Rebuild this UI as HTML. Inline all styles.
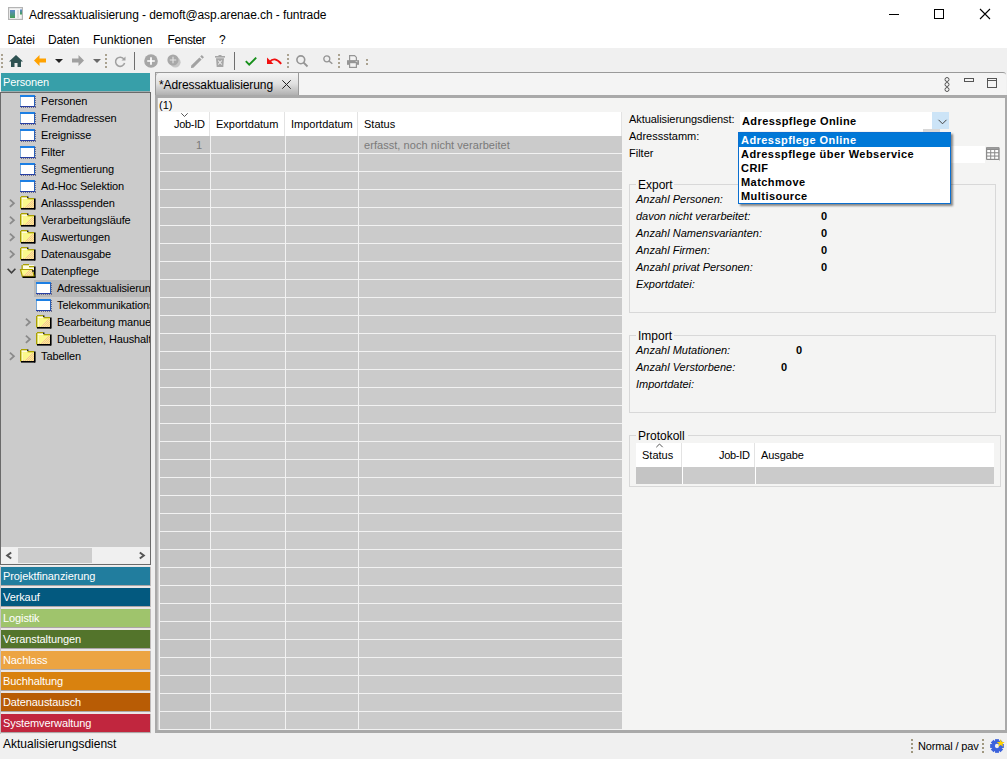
<!DOCTYPE html>
<html><head><meta charset="utf-8">
<style>
*{box-sizing:border-box;margin:0;padding:0}
html,body{width:1007px;height:759px;overflow:hidden;background:#f0f0f0;font-family:"Liberation Sans",sans-serif;color:#000}
body{position:relative}
.a{position:absolute}
.t{position:absolute;white-space:pre;line-height:1}
svg{position:absolute;overflow:visible}
</style></head><body>

<div class="a" style="left:0px;top:0px;width:1007px;height:48px;background:#fff;"></div>
<svg style="left:8px;top:7px" width="15" height="13" viewBox="0 0 15 13"><defs><linearGradient id="ig" x1="0" y1="0" x2="0" y2="1"><stop offset="0" stop-color="#5a88c8"/><stop offset="1" stop-color="#44a055"/></linearGradient></defs><rect x="0.6" y="0.6" width="13.8" height="11.8" fill="#f6f6f6" stroke="#b4b4b4" stroke-width="1.2"/><rect x="2" y="3" width="5" height="8" fill="url(#ig)"/><rect x="9" y="3" width="2" height="8" fill="#dedede"/><rect x="12" y="2.5" width="2" height="5" fill="url(#ig)"/></svg>
<div class="t" style="left:29px;top:8.84px;font-size:12px;font-weight:400;font-style:normal;color:#000;letter-spacing:-0.08px">Adressaktualisierung - demoft@asp.arenae.ch - funtrade</div>
<div class="a" style="left:889px;top:14px;width:10px;height:1px;background:#000;"></div>
<svg style="left:934px;top:9px" width="10" height="10"><rect x="0.5" y="0.5" width="9" height="9" fill="none" stroke="#000"/></svg>
<svg style="left:980px;top:9px" width="10" height="10"><path d="M0 0L10 10M10 0L0 10" stroke="#000" stroke-width="1.1"/></svg>
<div class="t" style="left:7.5px;top:33.84px;font-size:12px;font-weight:400;font-style:normal;color:#000;letter-spacing:-0.15px">Datei</div>
<div class="t" style="left:48px;top:33.84px;font-size:12px;font-weight:400;font-style:normal;color:#000;letter-spacing:-0.15px">Daten</div>
<div class="t" style="left:93px;top:33.84px;font-size:12px;font-weight:400;font-style:normal;color:#000;letter-spacing:0px">Funktionen</div>
<div class="t" style="left:167.5px;top:33.84px;font-size:12px;font-weight:400;font-style:normal;color:#000;letter-spacing:-0.4px">Fenster</div>
<div class="t" style="left:219px;top:33.84px;font-size:12px;font-weight:400;font-style:normal;color:#000;letter-spacing:0px">?</div>
<div class="a" style="left:1px;top:54px;width:2px;height:2px;background:#aaa290;"></div>
<div class="a" style="left:1px;top:58px;width:2px;height:2px;background:#aaa290;"></div>
<div class="a" style="left:1px;top:62px;width:2px;height:2px;background:#aaa290;"></div>
<div class="a" style="left:1px;top:66px;width:2px;height:2px;background:#aaa290;"></div>
<svg style="left:9px;top:55px" width="14" height="12" viewBox="0 0 14 12"><path d="M7 0L14 6.5H12V12H8.5V8H5.5V12H2V6.5H0Z" fill="#2e5252"/></svg>
<svg style="left:34px;top:55px" width="12" height="11" viewBox="0 0 12 11"><path d="M0 5.5L5.5 0V3.5H12V7.5H5.5V11Z" fill="#ffa200"/></svg>
<svg style="left:55px;top:59px" width="8" height="4"><path d="M0 0H8L4 4Z" fill="#222"/></svg>
<svg style="left:72px;top:55px" width="12" height="11" viewBox="0 0 12 11"><path d="M12 5.5L6.5 0V3.5H0V7.5H6.5V11Z" fill="#a0a0a0"/></svg>
<svg style="left:93px;top:59px" width="8" height="4"><path d="M0 0H8L4 4Z" fill="#6a6a6a"/></svg>
<div class="a" style="left:105px;top:54px;width:2px;height:2px;background:#aaa290;"></div>
<div class="a" style="left:105px;top:58px;width:2px;height:2px;background:#aaa290;"></div>
<div class="a" style="left:105px;top:62px;width:2px;height:2px;background:#aaa290;"></div>
<div class="a" style="left:105px;top:66px;width:2px;height:2px;background:#aaa290;"></div>
<svg style="left:114px;top:56px" width="12" height="11" viewBox="0 0 12 11"><path d="M10 3.2A4.6 4.6 0 1 0 10.6 7" fill="none" stroke="#a0a0a0" stroke-width="1.5"/><path d="M11.5 0.5V4.5H7.5Z" fill="#a0a0a0"/></svg>
<div class="a" style="left:134px;top:52px;width:1px;height:18px;background:#6e6e6e;"></div>
<svg style="left:144px;top:54px" width="14" height="14" viewBox="0 0 14 14"><circle cx="7" cy="7" r="6.8" fill="#a6a6a6"/><path d="M7 3.2V10.8M3.2 7H10.8" stroke="#fff" stroke-width="1.7"/></svg>
<svg style="left:167px;top:54px" width="14" height="14" viewBox="0 0 14 14"><circle cx="8.3" cy="8.3" r="5.3" fill="#c6c6c6"/><circle cx="6" cy="6" r="5.6" fill="#a8a8a8"/><path d="M6 2.8V9.2M2.8 6H9.2" stroke="#e4e4e4" stroke-width="1.1"/></svg>
<svg style="left:191px;top:55px" width="13" height="13" viewBox="0 0 13 13"><path d="M0 13L0.2 10.6L8.4 2.4L10.6 4.6L2.4 12.8Z" fill="#a2a2a2"/><path d="M9.2 1.6L10.8 0L13 2.2L11.4 3.8Z" fill="#a2a2a2"/></svg>
<svg style="left:215px;top:55px" width="10" height="12" viewBox="0 0 10 12"><rect x="0" y="1" width="10" height="1.6" fill="#a6a6a6"/><rect x="3.5" y="0" width="3" height="1.2" fill="#a6a6a6"/><path d="M1 3.2H9L8.3 12H1.7Z" fill="#a6a6a6"/><path d="M3.2 5.5L6.8 9.5M6.8 5.5L3.2 9.5" stroke="#f0f0f0" stroke-width="1.1"/></svg>
<div class="a" style="left:234px;top:52px;width:1px;height:18px;background:#6e6e6e;"></div>
<svg style="left:245px;top:57px" width="12" height="9" viewBox="0 0 12 9"><path d="M0.8 4.2L4.2 7.6L11.2 0.6" fill="none" stroke="#17901b" stroke-width="1.9"/></svg>
<svg style="left:266px;top:57px" width="16" height="8" viewBox="0 0 16 8"><path d="M3.5 5.2Q8.5 -1.2 15.2 6.8" fill="none" stroke="#f01010" stroke-width="1.9"/><path d="M1 0.5V7H7.5Z" fill="#f01010"/></svg>
<div class="a" style="left:287px;top:54px;width:2px;height:2px;background:#aaa290;"></div>
<div class="a" style="left:287px;top:58px;width:2px;height:2px;background:#aaa290;"></div>
<div class="a" style="left:287px;top:62px;width:2px;height:2px;background:#aaa290;"></div>
<div class="a" style="left:287px;top:66px;width:2px;height:2px;background:#aaa290;"></div>
<svg style="left:296px;top:55px" width="12" height="12" viewBox="0 0 12 12"><circle cx="4.8" cy="4.8" r="3.9" fill="none" stroke="#959595" stroke-width="1.6"/><path d="M7.5 7.5L11.5 11.5" stroke="#959595" stroke-width="1.8"/></svg>
<svg style="left:323px;top:55px" width="10" height="9" viewBox="0 0 10 9"><circle cx="3.8" cy="3.8" r="3" fill="none" stroke="#959595" stroke-width="1.3"/><path d="M6 6L9.3 8.8" stroke="#959595" stroke-width="1.5"/></svg>
<div class="a" style="left:338px;top:54px;width:2px;height:2px;background:#aaa290;"></div>
<div class="a" style="left:338px;top:58px;width:2px;height:2px;background:#aaa290;"></div>
<div class="a" style="left:338px;top:62px;width:2px;height:2px;background:#aaa290;"></div>
<div class="a" style="left:338px;top:66px;width:2px;height:2px;background:#aaa290;"></div>
<svg style="left:347px;top:55px" width="12" height="13" viewBox="0 0 12 13"><path d="M2.6 0.6H7.6L9.4 2.4V6H2.6Z" fill="#f2f2f2" stroke="#959595" stroke-width="1.2"/><rect x="0" y="5.2" width="12" height="4.6" fill="#959595"/><rect x="8.6" y="6.2" width="1.8" height="1.2" fill="#dedede"/><rect x="2.6" y="7.6" width="6.8" height="4.8" fill="#f2f2f2" stroke="#959595" stroke-width="1.2"/></svg>
<div class="a" style="left:366px;top:59px;width:2px;height:2px;background:#aaa290;"></div>
<div class="a" style="left:366px;top:63px;width:2px;height:2px;background:#aaa290;"></div>
<div class="a" style="left:1px;top:73px;width:149px;height:18px;background:#379fa9;"></div>
<div class="t" style="left:3px;top:76.69px;font-size:11px;font-weight:400;font-style:normal;color:#fff;letter-spacing:-0.15px">Personen</div>
<div class="a" style="left:1px;top:91px;width:149px;height:1px;background:#9aaeb0;"></div>
<div class="a" style="left:0px;top:92px;width:151px;height:472px;background:#cbcbcb;border-left:1px solid #6a6a6a;border-top:1px solid #6a6a6a;border-right:1px solid #6a6a6a;"></div>
<div class="a" style="left:1px;top:93px;width:149px;height:454px;overflow:hidden">
<svg style="left:19px;top:2px" width="16" height="13" viewBox="0 0 16 13"><rect x="0" y="0" width="15" height="2" fill="#1c7fe4"/><rect x="0" y="2" width="1" height="10" fill="#78a8d8"/><rect x="1" y="2" width="13" height="9" fill="#fff"/><rect x="14" y="1" width="1" height="11" fill="#2860b8"/><rect x="0" y="11" width="15" height="1" fill="#2840a4"/><path d="M15.5 1V13M1 12.5H16" fill="none" stroke="#6c6c88" stroke-dasharray="1 1"/></svg>
<div class="t" style="left:40px;top:2.69px;font-size:11px;font-weight:400;font-style:normal;color:#000;letter-spacing:-0.12px">Personen</div>
<svg style="left:19px;top:19px" width="16" height="13" viewBox="0 0 16 13"><rect x="0" y="0" width="15" height="2" fill="#1c7fe4"/><rect x="0" y="2" width="1" height="10" fill="#78a8d8"/><rect x="1" y="2" width="13" height="9" fill="#fff"/><rect x="14" y="1" width="1" height="11" fill="#2860b8"/><rect x="0" y="11" width="15" height="1" fill="#2840a4"/><path d="M15.5 1V13M1 12.5H16" fill="none" stroke="#6c6c88" stroke-dasharray="1 1"/></svg>
<div class="t" style="left:40px;top:19.69px;font-size:11px;font-weight:400;font-style:normal;color:#000;letter-spacing:-0.12px">Fremdadressen</div>
<svg style="left:19px;top:36px" width="16" height="13" viewBox="0 0 16 13"><rect x="0" y="0" width="15" height="2" fill="#1c7fe4"/><rect x="0" y="2" width="1" height="10" fill="#78a8d8"/><rect x="1" y="2" width="13" height="9" fill="#fff"/><rect x="14" y="1" width="1" height="11" fill="#2860b8"/><rect x="0" y="11" width="15" height="1" fill="#2840a4"/><path d="M15.5 1V13M1 12.5H16" fill="none" stroke="#6c6c88" stroke-dasharray="1 1"/></svg>
<div class="t" style="left:40px;top:36.69px;font-size:11px;font-weight:400;font-style:normal;color:#000;letter-spacing:-0.12px">Ereignisse</div>
<svg style="left:19px;top:53px" width="16" height="13" viewBox="0 0 16 13"><rect x="0" y="0" width="15" height="2" fill="#1c7fe4"/><rect x="0" y="2" width="1" height="10" fill="#78a8d8"/><rect x="1" y="2" width="13" height="9" fill="#fff"/><rect x="14" y="1" width="1" height="11" fill="#2860b8"/><rect x="0" y="11" width="15" height="1" fill="#2840a4"/><path d="M15.5 1V13M1 12.5H16" fill="none" stroke="#6c6c88" stroke-dasharray="1 1"/></svg>
<div class="t" style="left:40px;top:53.69px;font-size:11px;font-weight:400;font-style:normal;color:#000;letter-spacing:-0.12px">Filter</div>
<svg style="left:19px;top:70px" width="16" height="13" viewBox="0 0 16 13"><rect x="0" y="0" width="15" height="2" fill="#1c7fe4"/><rect x="0" y="2" width="1" height="10" fill="#78a8d8"/><rect x="1" y="2" width="13" height="9" fill="#fff"/><rect x="14" y="1" width="1" height="11" fill="#2860b8"/><rect x="0" y="11" width="15" height="1" fill="#2840a4"/><path d="M15.5 1V13M1 12.5H16" fill="none" stroke="#6c6c88" stroke-dasharray="1 1"/></svg>
<div class="t" style="left:40px;top:70.69px;font-size:11px;font-weight:400;font-style:normal;color:#000;letter-spacing:-0.12px">Segmentierung</div>
<svg style="left:19px;top:87px" width="16" height="13" viewBox="0 0 16 13"><rect x="0" y="0" width="15" height="2" fill="#1c7fe4"/><rect x="0" y="2" width="1" height="10" fill="#78a8d8"/><rect x="1" y="2" width="13" height="9" fill="#fff"/><rect x="14" y="1" width="1" height="11" fill="#2860b8"/><rect x="0" y="11" width="15" height="1" fill="#2840a4"/><path d="M15.5 1V13M1 12.5H16" fill="none" stroke="#6c6c88" stroke-dasharray="1 1"/></svg>
<div class="t" style="left:40px;top:87.69px;font-size:11px;font-weight:400;font-style:normal;color:#000;letter-spacing:-0.12px">Ad-Hoc Selektion</div>
<svg style="left:19px;top:103px" width="16" height="14" viewBox="0 0 16 14"><rect x="1" y="1" width="7" height="2" fill="#fffde0"/><rect x="1" y="3" width="13" height="9" fill="#fbf88c"/><rect x="1.5" y="3.5" width="1" height="8" fill="#fffff0"/><rect x="12" y="4" width="1" height="1" fill="#f6bc98"/><rect x="11" y="5" width="1" height="1" fill="#f6bc98"/><rect x="13" y="5" width="1" height="1" fill="#f6bc98"/><rect x="12" y="6" width="1" height="1" fill="#f6bc98"/><rect x="10" y="6" width="1" height="1" fill="#f6bc98"/><rect x="11" y="7" width="1" height="1" fill="#f6bc98"/><rect x="13" y="7" width="1" height="1" fill="#f6bc98"/><rect x="9" y="7" width="1" height="1" fill="#f6bc98"/><rect x="10" y="8" width="1" height="1" fill="#f6bc98"/><rect x="12" y="8" width="1" height="1" fill="#f6bc98"/><rect x="8" y="8" width="1" height="1" fill="#f6bc98"/><rect x="11" y="9" width="1" height="1" fill="#f6bc98"/><rect x="13" y="9" width="1" height="1" fill="#f6bc98"/><rect x="9" y="9" width="1" height="1" fill="#f6bc98"/><rect x="7" y="9" width="1" height="1" fill="#f6bc98"/><rect x="10" y="10" width="1" height="1" fill="#f6bc98"/><rect x="12" y="10" width="1" height="1" fill="#f6bc98"/><rect x="8" y="10" width="1" height="1" fill="#f6bc98"/><rect x="6" y="10" width="1" height="1" fill="#f6bc98"/><rect x="11" y="11" width="1" height="1" fill="#f6bc98"/><rect x="13" y="11" width="1" height="1" fill="#f6bc98"/><rect x="9" y="11" width="1" height="1" fill="#f6bc98"/><rect x="7" y="11" width="1" height="1" fill="#f6bc98"/><rect x="5" y="11" width="1" height="1" fill="#f6bc98"/><rect x="3" y="11" width="1" height="1" fill="#f6bc98"/><rect x="1" y="0" width="6.5" height="1.3" fill="#aaa000"/><rect x="7" y="0.5" width="1.5" height="1.5" fill="#222"/><rect x="0" y="1" width="1.4" height="11.5" fill="#aaa000"/><rect x="7.5" y="2" width="6.5" height="1.3" fill="#aaa000"/><rect x="1" y="12" width="14" height="1.6" fill="#000"/><rect x="14" y="2.5" width="1.6" height="11" fill="#000"/></svg>
<svg style="left:8px;top:106px" width="6" height="8" viewBox="0 0 6 8"><path d="M0.9 0.6L4.9 4.2L0.9 7.8" fill="none" stroke="#8a8a8a" stroke-width="1.8"/></svg>
<div class="t" style="left:40px;top:104.69px;font-size:11px;font-weight:400;font-style:normal;color:#000;letter-spacing:-0.12px">Anlassspenden</div>
<svg style="left:19px;top:120px" width="16" height="14" viewBox="0 0 16 14"><rect x="1" y="1" width="7" height="2" fill="#fffde0"/><rect x="1" y="3" width="13" height="9" fill="#fbf88c"/><rect x="1.5" y="3.5" width="1" height="8" fill="#fffff0"/><rect x="12" y="4" width="1" height="1" fill="#f6bc98"/><rect x="11" y="5" width="1" height="1" fill="#f6bc98"/><rect x="13" y="5" width="1" height="1" fill="#f6bc98"/><rect x="12" y="6" width="1" height="1" fill="#f6bc98"/><rect x="10" y="6" width="1" height="1" fill="#f6bc98"/><rect x="11" y="7" width="1" height="1" fill="#f6bc98"/><rect x="13" y="7" width="1" height="1" fill="#f6bc98"/><rect x="9" y="7" width="1" height="1" fill="#f6bc98"/><rect x="10" y="8" width="1" height="1" fill="#f6bc98"/><rect x="12" y="8" width="1" height="1" fill="#f6bc98"/><rect x="8" y="8" width="1" height="1" fill="#f6bc98"/><rect x="11" y="9" width="1" height="1" fill="#f6bc98"/><rect x="13" y="9" width="1" height="1" fill="#f6bc98"/><rect x="9" y="9" width="1" height="1" fill="#f6bc98"/><rect x="7" y="9" width="1" height="1" fill="#f6bc98"/><rect x="10" y="10" width="1" height="1" fill="#f6bc98"/><rect x="12" y="10" width="1" height="1" fill="#f6bc98"/><rect x="8" y="10" width="1" height="1" fill="#f6bc98"/><rect x="6" y="10" width="1" height="1" fill="#f6bc98"/><rect x="11" y="11" width="1" height="1" fill="#f6bc98"/><rect x="13" y="11" width="1" height="1" fill="#f6bc98"/><rect x="9" y="11" width="1" height="1" fill="#f6bc98"/><rect x="7" y="11" width="1" height="1" fill="#f6bc98"/><rect x="5" y="11" width="1" height="1" fill="#f6bc98"/><rect x="3" y="11" width="1" height="1" fill="#f6bc98"/><rect x="1" y="0" width="6.5" height="1.3" fill="#aaa000"/><rect x="7" y="0.5" width="1.5" height="1.5" fill="#222"/><rect x="0" y="1" width="1.4" height="11.5" fill="#aaa000"/><rect x="7.5" y="2" width="6.5" height="1.3" fill="#aaa000"/><rect x="1" y="12" width="14" height="1.6" fill="#000"/><rect x="14" y="2.5" width="1.6" height="11" fill="#000"/></svg>
<svg style="left:8px;top:123px" width="6" height="8" viewBox="0 0 6 8"><path d="M0.9 0.6L4.9 4.2L0.9 7.8" fill="none" stroke="#8a8a8a" stroke-width="1.8"/></svg>
<div class="t" style="left:40px;top:121.69px;font-size:11px;font-weight:400;font-style:normal;color:#000;letter-spacing:-0.12px">Verarbeitungsläufe</div>
<svg style="left:19px;top:137px" width="16" height="14" viewBox="0 0 16 14"><rect x="1" y="1" width="7" height="2" fill="#fffde0"/><rect x="1" y="3" width="13" height="9" fill="#fbf88c"/><rect x="1.5" y="3.5" width="1" height="8" fill="#fffff0"/><rect x="12" y="4" width="1" height="1" fill="#f6bc98"/><rect x="11" y="5" width="1" height="1" fill="#f6bc98"/><rect x="13" y="5" width="1" height="1" fill="#f6bc98"/><rect x="12" y="6" width="1" height="1" fill="#f6bc98"/><rect x="10" y="6" width="1" height="1" fill="#f6bc98"/><rect x="11" y="7" width="1" height="1" fill="#f6bc98"/><rect x="13" y="7" width="1" height="1" fill="#f6bc98"/><rect x="9" y="7" width="1" height="1" fill="#f6bc98"/><rect x="10" y="8" width="1" height="1" fill="#f6bc98"/><rect x="12" y="8" width="1" height="1" fill="#f6bc98"/><rect x="8" y="8" width="1" height="1" fill="#f6bc98"/><rect x="11" y="9" width="1" height="1" fill="#f6bc98"/><rect x="13" y="9" width="1" height="1" fill="#f6bc98"/><rect x="9" y="9" width="1" height="1" fill="#f6bc98"/><rect x="7" y="9" width="1" height="1" fill="#f6bc98"/><rect x="10" y="10" width="1" height="1" fill="#f6bc98"/><rect x="12" y="10" width="1" height="1" fill="#f6bc98"/><rect x="8" y="10" width="1" height="1" fill="#f6bc98"/><rect x="6" y="10" width="1" height="1" fill="#f6bc98"/><rect x="11" y="11" width="1" height="1" fill="#f6bc98"/><rect x="13" y="11" width="1" height="1" fill="#f6bc98"/><rect x="9" y="11" width="1" height="1" fill="#f6bc98"/><rect x="7" y="11" width="1" height="1" fill="#f6bc98"/><rect x="5" y="11" width="1" height="1" fill="#f6bc98"/><rect x="3" y="11" width="1" height="1" fill="#f6bc98"/><rect x="1" y="0" width="6.5" height="1.3" fill="#aaa000"/><rect x="7" y="0.5" width="1.5" height="1.5" fill="#222"/><rect x="0" y="1" width="1.4" height="11.5" fill="#aaa000"/><rect x="7.5" y="2" width="6.5" height="1.3" fill="#aaa000"/><rect x="1" y="12" width="14" height="1.6" fill="#000"/><rect x="14" y="2.5" width="1.6" height="11" fill="#000"/></svg>
<svg style="left:8px;top:140px" width="6" height="8" viewBox="0 0 6 8"><path d="M0.9 0.6L4.9 4.2L0.9 7.8" fill="none" stroke="#8a8a8a" stroke-width="1.8"/></svg>
<div class="t" style="left:40px;top:138.69px;font-size:11px;font-weight:400;font-style:normal;color:#000;letter-spacing:-0.12px">Auswertungen</div>
<svg style="left:19px;top:154px" width="16" height="14" viewBox="0 0 16 14"><rect x="1" y="1" width="7" height="2" fill="#fffde0"/><rect x="1" y="3" width="13" height="9" fill="#fbf88c"/><rect x="1.5" y="3.5" width="1" height="8" fill="#fffff0"/><rect x="12" y="4" width="1" height="1" fill="#f6bc98"/><rect x="11" y="5" width="1" height="1" fill="#f6bc98"/><rect x="13" y="5" width="1" height="1" fill="#f6bc98"/><rect x="12" y="6" width="1" height="1" fill="#f6bc98"/><rect x="10" y="6" width="1" height="1" fill="#f6bc98"/><rect x="11" y="7" width="1" height="1" fill="#f6bc98"/><rect x="13" y="7" width="1" height="1" fill="#f6bc98"/><rect x="9" y="7" width="1" height="1" fill="#f6bc98"/><rect x="10" y="8" width="1" height="1" fill="#f6bc98"/><rect x="12" y="8" width="1" height="1" fill="#f6bc98"/><rect x="8" y="8" width="1" height="1" fill="#f6bc98"/><rect x="11" y="9" width="1" height="1" fill="#f6bc98"/><rect x="13" y="9" width="1" height="1" fill="#f6bc98"/><rect x="9" y="9" width="1" height="1" fill="#f6bc98"/><rect x="7" y="9" width="1" height="1" fill="#f6bc98"/><rect x="10" y="10" width="1" height="1" fill="#f6bc98"/><rect x="12" y="10" width="1" height="1" fill="#f6bc98"/><rect x="8" y="10" width="1" height="1" fill="#f6bc98"/><rect x="6" y="10" width="1" height="1" fill="#f6bc98"/><rect x="11" y="11" width="1" height="1" fill="#f6bc98"/><rect x="13" y="11" width="1" height="1" fill="#f6bc98"/><rect x="9" y="11" width="1" height="1" fill="#f6bc98"/><rect x="7" y="11" width="1" height="1" fill="#f6bc98"/><rect x="5" y="11" width="1" height="1" fill="#f6bc98"/><rect x="3" y="11" width="1" height="1" fill="#f6bc98"/><rect x="1" y="0" width="6.5" height="1.3" fill="#aaa000"/><rect x="7" y="0.5" width="1.5" height="1.5" fill="#222"/><rect x="0" y="1" width="1.4" height="11.5" fill="#aaa000"/><rect x="7.5" y="2" width="6.5" height="1.3" fill="#aaa000"/><rect x="1" y="12" width="14" height="1.6" fill="#000"/><rect x="14" y="2.5" width="1.6" height="11" fill="#000"/></svg>
<svg style="left:8px;top:157px" width="6" height="8" viewBox="0 0 6 8"><path d="M0.9 0.6L4.9 4.2L0.9 7.8" fill="none" stroke="#8a8a8a" stroke-width="1.8"/></svg>
<div class="t" style="left:40px;top:155.69px;font-size:11px;font-weight:400;font-style:normal;color:#000;letter-spacing:-0.12px">Datenausgabe</div>
<svg style="left:19px;top:171px" width="16" height="14" viewBox="0 0 16 14"><rect x="2" y="1" width="12" height="5" fill="#fffde0"/><rect x="3" y="0" width="6" height="1.3" fill="#aaa000"/><rect x="1.5" y="1" width="1.3" height="5" fill="#aaa000"/><rect x="9" y="2" width="5" height="1.3" fill="#aaa000"/><rect x="14" y="2.5" width="1.6" height="11" fill="#000"/><path d="M0.5 5.5H12.5L14 12.3H2.3Z" fill="#fbf88c" stroke="#aaa000" stroke-width="1.2"/><rect x="9" y="6" width="1" height="1" fill="#f6bc98"/><rect x="11" y="6" width="1" height="1" fill="#f6bc98"/><rect x="8" y="7" width="1" height="1" fill="#f6bc98"/><rect x="10" y="7" width="1" height="1" fill="#f6bc98"/><rect x="12" y="7" width="1" height="1" fill="#f6bc98"/><rect x="7" y="8" width="1" height="1" fill="#f6bc98"/><rect x="9" y="8" width="1" height="1" fill="#f6bc98"/><rect x="11" y="8" width="1" height="1" fill="#f6bc98"/><rect x="6" y="9" width="1" height="1" fill="#f6bc98"/><rect x="8" y="9" width="1" height="1" fill="#f6bc98"/><rect x="10" y="9" width="1" height="1" fill="#f6bc98"/><rect x="12" y="9" width="1" height="1" fill="#f6bc98"/><rect x="5" y="10" width="1" height="1" fill="#f6bc98"/><rect x="7" y="10" width="1" height="1" fill="#f6bc98"/><rect x="9" y="10" width="1" height="1" fill="#f6bc98"/><rect x="11" y="10" width="1" height="1" fill="#f6bc98"/><rect x="4" y="11" width="1" height="1" fill="#f6bc98"/><rect x="6" y="11" width="1" height="1" fill="#f6bc98"/><rect x="8" y="11" width="1" height="1" fill="#f6bc98"/><rect x="10" y="11" width="1" height="1" fill="#f6bc98"/><rect x="12" y="11" width="1" height="1" fill="#f6bc98"/><rect x="12.3" y="6" width="1.3" height="2" fill="#111"/><rect x="2.5" y="12.5" width="13" height="1.5" fill="#000"/></svg>
<svg style="left:6px;top:175px" width="9" height="6" viewBox="0 0 9 6"><path d="M0.6 0.8L4.5 4.8L8.4 0.8" fill="none" stroke="#404040" stroke-width="1.6"/></svg>
<div class="t" style="left:40px;top:172.69px;font-size:11px;font-weight:400;font-style:normal;color:#000;letter-spacing:-0.12px">Datenpflege</div>
<div class="a" style="left:33px;top:187px;width:120px;height:17px;background:#b8b8b8;"></div>
<svg style="left:35px;top:189px" width="16" height="13" viewBox="0 0 16 13"><rect x="0" y="0" width="15" height="2" fill="#1c7fe4"/><rect x="0" y="2" width="1" height="10" fill="#78a8d8"/><rect x="1" y="2" width="13" height="9" fill="#fff"/><rect x="14" y="1" width="1" height="11" fill="#2860b8"/><rect x="0" y="11" width="15" height="1" fill="#2840a4"/><path d="M15.5 1V13M1 12.5H16" fill="none" stroke="#6c6c88" stroke-dasharray="1 1"/></svg>
<div class="t" style="left:56px;top:189.69px;font-size:11px;font-weight:400;font-style:normal;color:#000;letter-spacing:-0.12px">Adressaktualisierung</div>
<svg style="left:35px;top:206px" width="16" height="13" viewBox="0 0 16 13"><rect x="0" y="0" width="15" height="2" fill="#1c7fe4"/><rect x="0" y="2" width="1" height="10" fill="#78a8d8"/><rect x="1" y="2" width="13" height="9" fill="#fff"/><rect x="14" y="1" width="1" height="11" fill="#2860b8"/><rect x="0" y="11" width="15" height="1" fill="#2840a4"/><path d="M15.5 1V13M1 12.5H16" fill="none" stroke="#6c6c88" stroke-dasharray="1 1"/></svg>
<div class="t" style="left:56px;top:206.69px;font-size:11px;font-weight:400;font-style:normal;color:#000;letter-spacing:-0.12px">Telekommunikationsnummern</div>
<svg style="left:35px;top:222px" width="16" height="14" viewBox="0 0 16 14"><rect x="1" y="1" width="7" height="2" fill="#fffde0"/><rect x="1" y="3" width="13" height="9" fill="#fbf88c"/><rect x="1.5" y="3.5" width="1" height="8" fill="#fffff0"/><rect x="12" y="4" width="1" height="1" fill="#f6bc98"/><rect x="11" y="5" width="1" height="1" fill="#f6bc98"/><rect x="13" y="5" width="1" height="1" fill="#f6bc98"/><rect x="12" y="6" width="1" height="1" fill="#f6bc98"/><rect x="10" y="6" width="1" height="1" fill="#f6bc98"/><rect x="11" y="7" width="1" height="1" fill="#f6bc98"/><rect x="13" y="7" width="1" height="1" fill="#f6bc98"/><rect x="9" y="7" width="1" height="1" fill="#f6bc98"/><rect x="10" y="8" width="1" height="1" fill="#f6bc98"/><rect x="12" y="8" width="1" height="1" fill="#f6bc98"/><rect x="8" y="8" width="1" height="1" fill="#f6bc98"/><rect x="11" y="9" width="1" height="1" fill="#f6bc98"/><rect x="13" y="9" width="1" height="1" fill="#f6bc98"/><rect x="9" y="9" width="1" height="1" fill="#f6bc98"/><rect x="7" y="9" width="1" height="1" fill="#f6bc98"/><rect x="10" y="10" width="1" height="1" fill="#f6bc98"/><rect x="12" y="10" width="1" height="1" fill="#f6bc98"/><rect x="8" y="10" width="1" height="1" fill="#f6bc98"/><rect x="6" y="10" width="1" height="1" fill="#f6bc98"/><rect x="11" y="11" width="1" height="1" fill="#f6bc98"/><rect x="13" y="11" width="1" height="1" fill="#f6bc98"/><rect x="9" y="11" width="1" height="1" fill="#f6bc98"/><rect x="7" y="11" width="1" height="1" fill="#f6bc98"/><rect x="5" y="11" width="1" height="1" fill="#f6bc98"/><rect x="3" y="11" width="1" height="1" fill="#f6bc98"/><rect x="1" y="0" width="6.5" height="1.3" fill="#aaa000"/><rect x="7" y="0.5" width="1.5" height="1.5" fill="#222"/><rect x="0" y="1" width="1.4" height="11.5" fill="#aaa000"/><rect x="7.5" y="2" width="6.5" height="1.3" fill="#aaa000"/><rect x="1" y="12" width="14" height="1.6" fill="#000"/><rect x="14" y="2.5" width="1.6" height="11" fill="#000"/></svg>
<svg style="left:24px;top:225px" width="6" height="8" viewBox="0 0 6 8"><path d="M0.9 0.6L4.9 4.2L0.9 7.8" fill="none" stroke="#8a8a8a" stroke-width="1.8"/></svg>
<div class="t" style="left:56px;top:223.69px;font-size:11px;font-weight:400;font-style:normal;color:#000;letter-spacing:-0.12px">Bearbeitung manuelle</div>
<svg style="left:35px;top:239px" width="16" height="14" viewBox="0 0 16 14"><rect x="1" y="1" width="7" height="2" fill="#fffde0"/><rect x="1" y="3" width="13" height="9" fill="#fbf88c"/><rect x="1.5" y="3.5" width="1" height="8" fill="#fffff0"/><rect x="12" y="4" width="1" height="1" fill="#f6bc98"/><rect x="11" y="5" width="1" height="1" fill="#f6bc98"/><rect x="13" y="5" width="1" height="1" fill="#f6bc98"/><rect x="12" y="6" width="1" height="1" fill="#f6bc98"/><rect x="10" y="6" width="1" height="1" fill="#f6bc98"/><rect x="11" y="7" width="1" height="1" fill="#f6bc98"/><rect x="13" y="7" width="1" height="1" fill="#f6bc98"/><rect x="9" y="7" width="1" height="1" fill="#f6bc98"/><rect x="10" y="8" width="1" height="1" fill="#f6bc98"/><rect x="12" y="8" width="1" height="1" fill="#f6bc98"/><rect x="8" y="8" width="1" height="1" fill="#f6bc98"/><rect x="11" y="9" width="1" height="1" fill="#f6bc98"/><rect x="13" y="9" width="1" height="1" fill="#f6bc98"/><rect x="9" y="9" width="1" height="1" fill="#f6bc98"/><rect x="7" y="9" width="1" height="1" fill="#f6bc98"/><rect x="10" y="10" width="1" height="1" fill="#f6bc98"/><rect x="12" y="10" width="1" height="1" fill="#f6bc98"/><rect x="8" y="10" width="1" height="1" fill="#f6bc98"/><rect x="6" y="10" width="1" height="1" fill="#f6bc98"/><rect x="11" y="11" width="1" height="1" fill="#f6bc98"/><rect x="13" y="11" width="1" height="1" fill="#f6bc98"/><rect x="9" y="11" width="1" height="1" fill="#f6bc98"/><rect x="7" y="11" width="1" height="1" fill="#f6bc98"/><rect x="5" y="11" width="1" height="1" fill="#f6bc98"/><rect x="3" y="11" width="1" height="1" fill="#f6bc98"/><rect x="1" y="0" width="6.5" height="1.3" fill="#aaa000"/><rect x="7" y="0.5" width="1.5" height="1.5" fill="#222"/><rect x="0" y="1" width="1.4" height="11.5" fill="#aaa000"/><rect x="7.5" y="2" width="6.5" height="1.3" fill="#aaa000"/><rect x="1" y="12" width="14" height="1.6" fill="#000"/><rect x="14" y="2.5" width="1.6" height="11" fill="#000"/></svg>
<svg style="left:24px;top:242px" width="6" height="8" viewBox="0 0 6 8"><path d="M0.9 0.6L4.9 4.2L0.9 7.8" fill="none" stroke="#8a8a8a" stroke-width="1.8"/></svg>
<div class="t" style="left:56px;top:240.69px;font-size:11px;font-weight:400;font-style:normal;color:#000;letter-spacing:-0.12px">Dubletten, Haushalte</div>
<svg style="left:19px;top:256px" width="16" height="14" viewBox="0 0 16 14"><rect x="1" y="1" width="7" height="2" fill="#fffde0"/><rect x="1" y="3" width="13" height="9" fill="#fbf88c"/><rect x="1.5" y="3.5" width="1" height="8" fill="#fffff0"/><rect x="12" y="4" width="1" height="1" fill="#f6bc98"/><rect x="11" y="5" width="1" height="1" fill="#f6bc98"/><rect x="13" y="5" width="1" height="1" fill="#f6bc98"/><rect x="12" y="6" width="1" height="1" fill="#f6bc98"/><rect x="10" y="6" width="1" height="1" fill="#f6bc98"/><rect x="11" y="7" width="1" height="1" fill="#f6bc98"/><rect x="13" y="7" width="1" height="1" fill="#f6bc98"/><rect x="9" y="7" width="1" height="1" fill="#f6bc98"/><rect x="10" y="8" width="1" height="1" fill="#f6bc98"/><rect x="12" y="8" width="1" height="1" fill="#f6bc98"/><rect x="8" y="8" width="1" height="1" fill="#f6bc98"/><rect x="11" y="9" width="1" height="1" fill="#f6bc98"/><rect x="13" y="9" width="1" height="1" fill="#f6bc98"/><rect x="9" y="9" width="1" height="1" fill="#f6bc98"/><rect x="7" y="9" width="1" height="1" fill="#f6bc98"/><rect x="10" y="10" width="1" height="1" fill="#f6bc98"/><rect x="12" y="10" width="1" height="1" fill="#f6bc98"/><rect x="8" y="10" width="1" height="1" fill="#f6bc98"/><rect x="6" y="10" width="1" height="1" fill="#f6bc98"/><rect x="11" y="11" width="1" height="1" fill="#f6bc98"/><rect x="13" y="11" width="1" height="1" fill="#f6bc98"/><rect x="9" y="11" width="1" height="1" fill="#f6bc98"/><rect x="7" y="11" width="1" height="1" fill="#f6bc98"/><rect x="5" y="11" width="1" height="1" fill="#f6bc98"/><rect x="3" y="11" width="1" height="1" fill="#f6bc98"/><rect x="1" y="0" width="6.5" height="1.3" fill="#aaa000"/><rect x="7" y="0.5" width="1.5" height="1.5" fill="#222"/><rect x="0" y="1" width="1.4" height="11.5" fill="#aaa000"/><rect x="7.5" y="2" width="6.5" height="1.3" fill="#aaa000"/><rect x="1" y="12" width="14" height="1.6" fill="#000"/><rect x="14" y="2.5" width="1.6" height="11" fill="#000"/></svg>
<svg style="left:8px;top:259px" width="6" height="8" viewBox="0 0 6 8"><path d="M0.9 0.6L4.9 4.2L0.9 7.8" fill="none" stroke="#8a8a8a" stroke-width="1.8"/></svg>
<div class="t" style="left:40px;top:257.69px;font-size:11px;font-weight:400;font-style:normal;color:#000;letter-spacing:-0.12px">Tabellen</div>
</div>
<div class="a" style="left:1px;top:547px;width:149px;height:17px;background:#f0f0f0;"></div>
<div class="a" style="left:18px;top:548px;width:74px;height:15px;background:#cdcdcd;"></div>
<svg style="left:6px;top:552px" width="6" height="7" viewBox="0 0 6 7"><path d="M5.2 0.5L1.2 3.5L5.2 6.5" fill="none" stroke="#555" stroke-width="2"/></svg>
<svg style="left:139px;top:552px" width="6" height="7" viewBox="0 0 6 7"><path d="M0.8 0.5L4.8 3.5L0.8 6.5" fill="none" stroke="#555" stroke-width="2"/></svg>
<div class="a" style="left:0px;top:564px;width:151px;height:1px;background:#6a6a6a;"></div>
<div class="a" style="left:0px;top:566px;width:151px;height:21px;background:#ebe7e7;"></div>
<div class="a" style="left:0px;top:566px;width:1px;height:21px;background:#c8c4c4;"></div>
<div class="a" style="left:1px;top:567px;width:149px;height:18px;background:#217d9e;"></div>
<div class="a" style="left:1px;top:585px;width:150px;height:1px;background:#aca6a6;"></div>
<div class="a" style="left:150px;top:567px;width:1px;height:19px;background:#c0bcbc;"></div>
<div class="t" style="left:3px;top:570.69px;font-size:11px;font-weight:400;font-style:normal;color:#fff;letter-spacing:-0.1px">Projektfinanzierung</div>
<div class="a" style="left:0px;top:587px;width:151px;height:21px;background:#ebe7e7;"></div>
<div class="a" style="left:0px;top:587px;width:1px;height:21px;background:#c8c4c4;"></div>
<div class="a" style="left:1px;top:588px;width:149px;height:18px;background:#03597f;"></div>
<div class="a" style="left:1px;top:606px;width:150px;height:1px;background:#aca6a6;"></div>
<div class="a" style="left:150px;top:588px;width:1px;height:19px;background:#c0bcbc;"></div>
<div class="t" style="left:3px;top:591.69px;font-size:11px;font-weight:400;font-style:normal;color:#fff;letter-spacing:-0.1px">Verkauf</div>
<div class="a" style="left:0px;top:608px;width:151px;height:21px;background:#ebe7e7;"></div>
<div class="a" style="left:0px;top:608px;width:1px;height:21px;background:#c8c4c4;"></div>
<div class="a" style="left:1px;top:609px;width:149px;height:18px;background:#9fc46c;"></div>
<div class="a" style="left:1px;top:627px;width:150px;height:1px;background:#aca6a6;"></div>
<div class="a" style="left:150px;top:609px;width:1px;height:19px;background:#c0bcbc;"></div>
<div class="t" style="left:3px;top:612.69px;font-size:11px;font-weight:400;font-style:normal;color:#fff;letter-spacing:-0.1px">Logistik</div>
<div class="a" style="left:0px;top:629px;width:151px;height:21px;background:#ebe7e7;"></div>
<div class="a" style="left:0px;top:629px;width:1px;height:21px;background:#c8c4c4;"></div>
<div class="a" style="left:1px;top:630px;width:149px;height:18px;background:#53742b;"></div>
<div class="a" style="left:1px;top:648px;width:150px;height:1px;background:#aca6a6;"></div>
<div class="a" style="left:150px;top:630px;width:1px;height:19px;background:#c0bcbc;"></div>
<div class="t" style="left:3px;top:633.69px;font-size:11px;font-weight:400;font-style:normal;color:#fff;letter-spacing:-0.1px">Veranstaltungen</div>
<div class="a" style="left:0px;top:650px;width:151px;height:21px;background:#ebe7e7;"></div>
<div class="a" style="left:0px;top:650px;width:1px;height:21px;background:#c8c4c4;"></div>
<div class="a" style="left:1px;top:651px;width:149px;height:18px;background:#eca442;"></div>
<div class="a" style="left:1px;top:669px;width:150px;height:1px;background:#aca6a6;"></div>
<div class="a" style="left:150px;top:651px;width:1px;height:19px;background:#c0bcbc;"></div>
<div class="t" style="left:3px;top:654.69px;font-size:11px;font-weight:400;font-style:normal;color:#fff;letter-spacing:-0.1px">Nachlass</div>
<div class="a" style="left:0px;top:671px;width:151px;height:21px;background:#ebe7e7;"></div>
<div class="a" style="left:0px;top:671px;width:1px;height:21px;background:#c8c4c4;"></div>
<div class="a" style="left:1px;top:672px;width:149px;height:18px;background:#d9820f;"></div>
<div class="a" style="left:1px;top:690px;width:150px;height:1px;background:#aca6a6;"></div>
<div class="a" style="left:150px;top:672px;width:1px;height:19px;background:#c0bcbc;"></div>
<div class="t" style="left:3px;top:675.69px;font-size:11px;font-weight:400;font-style:normal;color:#fff;letter-spacing:-0.1px">Buchhaltung</div>
<div class="a" style="left:0px;top:692px;width:151px;height:21px;background:#ebe7e7;"></div>
<div class="a" style="left:0px;top:692px;width:1px;height:21px;background:#c8c4c4;"></div>
<div class="a" style="left:1px;top:693px;width:149px;height:18px;background:#b85c05;"></div>
<div class="a" style="left:1px;top:711px;width:150px;height:1px;background:#aca6a6;"></div>
<div class="a" style="left:150px;top:693px;width:1px;height:19px;background:#c0bcbc;"></div>
<div class="t" style="left:3px;top:696.69px;font-size:11px;font-weight:400;font-style:normal;color:#fff;letter-spacing:-0.1px">Datenaustausch</div>
<div class="a" style="left:0px;top:713px;width:151px;height:21px;background:#ebe7e7;"></div>
<div class="a" style="left:0px;top:713px;width:1px;height:21px;background:#c8c4c4;"></div>
<div class="a" style="left:1px;top:714px;width:149px;height:18px;background:#c1263e;"></div>
<div class="a" style="left:1px;top:732px;width:150px;height:1px;background:#aca6a6;"></div>
<div class="a" style="left:150px;top:714px;width:1px;height:19px;background:#c0bcbc;"></div>
<div class="t" style="left:3px;top:717.69px;font-size:11px;font-weight:400;font-style:normal;color:#fff;letter-spacing:-0.1px">Systemverwaltung</div>
<div class="a" style="left:155px;top:72px;width:851px;height:25px;background:#f4f4f4;border-top:1px solid #9a9a9a;border-left:1px solid #9a9a9a;border-top-right-radius:3px;"></div>
<div class="a" style="left:155px;top:73px;width:144px;height:24px;background:linear-gradient(#f4f4f4,#e0e0e0 45%,#a8a8a8);border-left:1px solid #9a9a9a;border-right:1px solid #9a9a9a;border-top-left-radius:4px;"></div>
<div class="t" style="left:159px;top:78.84px;font-size:12px;font-weight:400;font-style:normal;color:#000;letter-spacing:-0.1px">*Adressaktualisierung</div>
<svg style="left:282px;top:80px" width="9" height="9"><path d="M0.3 0.3L8.7 8.7M8.7 0.3L0.3 8.7" stroke="#222" stroke-width="1"/></svg>
<svg style="left:944px;top:77px" width="6" height="15" viewBox="0 0 6 15"><circle cx="3" cy="2.5" r="2" fill="none" stroke="#555"/><circle cx="3" cy="7.5" r="2" fill="none" stroke="#555"/><circle cx="3" cy="12.5" r="2" fill="none" stroke="#555"/></svg>
<svg style="left:964px;top:78px" width="10" height="4"><rect x="0.5" y="0.5" width="9" height="3" fill="none" stroke="#555"/></svg>
<svg style="left:987px;top:78px" width="10" height="10"><rect x="0.5" y="0.5" width="9" height="9" fill="none" stroke="#555"/><path d="M0.5 2.5H9.5" stroke="#555"/></svg>
<div class="a" style="left:155px;top:95px;width:852px;height:638px;background:#a9a9a9;"></div>
<div class="a" style="left:158px;top:98px;width:847px;height:632px;background:#f4f4f3;"></div>
<div class="t" style="left:159px;top:99.69px;font-size:11px;font-weight:400;font-style:normal;color:#000;">(1)</div>
<div class="a" style="left:158px;top:112px;width:464px;height:24px;background:#fff;"></div>
<svg style="left:181px;top:113px" width="8" height="5"><path d="M0.3 0.3L3.5 3.5L6.7 0.3" fill="none" stroke="#555" stroke-width="1"/></svg>
<div class="a" style="left:209px;top:112px;width:1px;height:24px;background:#e3e3e3;"></div>
<div class="a" style="left:284px;top:112px;width:1px;height:24px;background:#e3e3e3;"></div>
<div class="a" style="left:357px;top:112px;width:1px;height:24px;background:#e3e3e3;"></div>
<div class="a" style="left:621px;top:112px;width:1px;height:24px;background:#e3e3e3;"></div>
<div class="t" style="left:174px;top:118.69px;font-size:11px;font-weight:400;font-style:normal;color:#000;letter-spacing:-0.3px">Job-ID</div>
<div class="t" style="left:216px;top:118.69px;font-size:11px;font-weight:400;font-style:normal;color:#000;">Exportdatum</div>
<div class="t" style="left:291px;top:118.69px;font-size:11px;font-weight:400;font-style:normal;color:#000;">Importdatum</div>
<div class="t" style="left:364px;top:118.69px;font-size:11px;font-weight:400;font-style:normal;color:#000;">Status</div>
<div class="a" style="left:158px;top:136px;width:464px;height:594px;background:#f2f2f2;"></div>
<div class="a" style="left:157px;top:98px;width:1px;height:632px;background:#bdbdbd;"></div>
<div class="a" style="left:158px;top:136px;width:1px;height:594px;background:#d4d4d4;"></div>
<div class="a" style="left:160px;top:136px;width:50px;height:17px;background:#c4c4c4;"></div>
<div class="a" style="left:211px;top:136px;width:74px;height:17px;background:#cbcbcb;"></div>
<div class="a" style="left:286px;top:136px;width:72px;height:17px;background:#cbcbcb;"></div>
<div class="a" style="left:359px;top:136px;width:263px;height:17px;background:#cbcbcb;"></div>
<div class="a" style="left:160px;top:154px;width:50px;height:17px;background:#c4c4c4;"></div>
<div class="a" style="left:211px;top:154px;width:74px;height:17px;background:#cbcbcb;"></div>
<div class="a" style="left:286px;top:154px;width:72px;height:17px;background:#cbcbcb;"></div>
<div class="a" style="left:359px;top:154px;width:263px;height:17px;background:#cbcbcb;"></div>
<div class="a" style="left:160px;top:172px;width:50px;height:17px;background:#c4c4c4;"></div>
<div class="a" style="left:211px;top:172px;width:74px;height:17px;background:#cbcbcb;"></div>
<div class="a" style="left:286px;top:172px;width:72px;height:17px;background:#cbcbcb;"></div>
<div class="a" style="left:359px;top:172px;width:263px;height:17px;background:#cbcbcb;"></div>
<div class="a" style="left:160px;top:190px;width:50px;height:17px;background:#c4c4c4;"></div>
<div class="a" style="left:211px;top:190px;width:74px;height:17px;background:#cbcbcb;"></div>
<div class="a" style="left:286px;top:190px;width:72px;height:17px;background:#cbcbcb;"></div>
<div class="a" style="left:359px;top:190px;width:263px;height:17px;background:#cbcbcb;"></div>
<div class="a" style="left:160px;top:208px;width:50px;height:17px;background:#c4c4c4;"></div>
<div class="a" style="left:211px;top:208px;width:74px;height:17px;background:#cbcbcb;"></div>
<div class="a" style="left:286px;top:208px;width:72px;height:17px;background:#cbcbcb;"></div>
<div class="a" style="left:359px;top:208px;width:263px;height:17px;background:#cbcbcb;"></div>
<div class="a" style="left:160px;top:226px;width:50px;height:17px;background:#c4c4c4;"></div>
<div class="a" style="left:211px;top:226px;width:74px;height:17px;background:#cbcbcb;"></div>
<div class="a" style="left:286px;top:226px;width:72px;height:17px;background:#cbcbcb;"></div>
<div class="a" style="left:359px;top:226px;width:263px;height:17px;background:#cbcbcb;"></div>
<div class="a" style="left:160px;top:244px;width:50px;height:17px;background:#c4c4c4;"></div>
<div class="a" style="left:211px;top:244px;width:74px;height:17px;background:#cbcbcb;"></div>
<div class="a" style="left:286px;top:244px;width:72px;height:17px;background:#cbcbcb;"></div>
<div class="a" style="left:359px;top:244px;width:263px;height:17px;background:#cbcbcb;"></div>
<div class="a" style="left:160px;top:262px;width:50px;height:17px;background:#c4c4c4;"></div>
<div class="a" style="left:211px;top:262px;width:74px;height:17px;background:#cbcbcb;"></div>
<div class="a" style="left:286px;top:262px;width:72px;height:17px;background:#cbcbcb;"></div>
<div class="a" style="left:359px;top:262px;width:263px;height:17px;background:#cbcbcb;"></div>
<div class="a" style="left:160px;top:280px;width:50px;height:17px;background:#c4c4c4;"></div>
<div class="a" style="left:211px;top:280px;width:74px;height:17px;background:#cbcbcb;"></div>
<div class="a" style="left:286px;top:280px;width:72px;height:17px;background:#cbcbcb;"></div>
<div class="a" style="left:359px;top:280px;width:263px;height:17px;background:#cbcbcb;"></div>
<div class="a" style="left:160px;top:298px;width:50px;height:17px;background:#c4c4c4;"></div>
<div class="a" style="left:211px;top:298px;width:74px;height:17px;background:#cbcbcb;"></div>
<div class="a" style="left:286px;top:298px;width:72px;height:17px;background:#cbcbcb;"></div>
<div class="a" style="left:359px;top:298px;width:263px;height:17px;background:#cbcbcb;"></div>
<div class="a" style="left:160px;top:316px;width:50px;height:17px;background:#c4c4c4;"></div>
<div class="a" style="left:211px;top:316px;width:74px;height:17px;background:#cbcbcb;"></div>
<div class="a" style="left:286px;top:316px;width:72px;height:17px;background:#cbcbcb;"></div>
<div class="a" style="left:359px;top:316px;width:263px;height:17px;background:#cbcbcb;"></div>
<div class="a" style="left:160px;top:334px;width:50px;height:17px;background:#c4c4c4;"></div>
<div class="a" style="left:211px;top:334px;width:74px;height:17px;background:#cbcbcb;"></div>
<div class="a" style="left:286px;top:334px;width:72px;height:17px;background:#cbcbcb;"></div>
<div class="a" style="left:359px;top:334px;width:263px;height:17px;background:#cbcbcb;"></div>
<div class="a" style="left:160px;top:352px;width:50px;height:17px;background:#c4c4c4;"></div>
<div class="a" style="left:211px;top:352px;width:74px;height:17px;background:#cbcbcb;"></div>
<div class="a" style="left:286px;top:352px;width:72px;height:17px;background:#cbcbcb;"></div>
<div class="a" style="left:359px;top:352px;width:263px;height:17px;background:#cbcbcb;"></div>
<div class="a" style="left:160px;top:370px;width:50px;height:17px;background:#c4c4c4;"></div>
<div class="a" style="left:211px;top:370px;width:74px;height:17px;background:#cbcbcb;"></div>
<div class="a" style="left:286px;top:370px;width:72px;height:17px;background:#cbcbcb;"></div>
<div class="a" style="left:359px;top:370px;width:263px;height:17px;background:#cbcbcb;"></div>
<div class="a" style="left:160px;top:388px;width:50px;height:17px;background:#c4c4c4;"></div>
<div class="a" style="left:211px;top:388px;width:74px;height:17px;background:#cbcbcb;"></div>
<div class="a" style="left:286px;top:388px;width:72px;height:17px;background:#cbcbcb;"></div>
<div class="a" style="left:359px;top:388px;width:263px;height:17px;background:#cbcbcb;"></div>
<div class="a" style="left:160px;top:406px;width:50px;height:17px;background:#c4c4c4;"></div>
<div class="a" style="left:211px;top:406px;width:74px;height:17px;background:#cbcbcb;"></div>
<div class="a" style="left:286px;top:406px;width:72px;height:17px;background:#cbcbcb;"></div>
<div class="a" style="left:359px;top:406px;width:263px;height:17px;background:#cbcbcb;"></div>
<div class="a" style="left:160px;top:424px;width:50px;height:17px;background:#c4c4c4;"></div>
<div class="a" style="left:211px;top:424px;width:74px;height:17px;background:#cbcbcb;"></div>
<div class="a" style="left:286px;top:424px;width:72px;height:17px;background:#cbcbcb;"></div>
<div class="a" style="left:359px;top:424px;width:263px;height:17px;background:#cbcbcb;"></div>
<div class="a" style="left:160px;top:442px;width:50px;height:17px;background:#c4c4c4;"></div>
<div class="a" style="left:211px;top:442px;width:74px;height:17px;background:#cbcbcb;"></div>
<div class="a" style="left:286px;top:442px;width:72px;height:17px;background:#cbcbcb;"></div>
<div class="a" style="left:359px;top:442px;width:263px;height:17px;background:#cbcbcb;"></div>
<div class="a" style="left:160px;top:460px;width:50px;height:17px;background:#c4c4c4;"></div>
<div class="a" style="left:211px;top:460px;width:74px;height:17px;background:#cbcbcb;"></div>
<div class="a" style="left:286px;top:460px;width:72px;height:17px;background:#cbcbcb;"></div>
<div class="a" style="left:359px;top:460px;width:263px;height:17px;background:#cbcbcb;"></div>
<div class="a" style="left:160px;top:478px;width:50px;height:17px;background:#c4c4c4;"></div>
<div class="a" style="left:211px;top:478px;width:74px;height:17px;background:#cbcbcb;"></div>
<div class="a" style="left:286px;top:478px;width:72px;height:17px;background:#cbcbcb;"></div>
<div class="a" style="left:359px;top:478px;width:263px;height:17px;background:#cbcbcb;"></div>
<div class="a" style="left:160px;top:496px;width:50px;height:17px;background:#c4c4c4;"></div>
<div class="a" style="left:211px;top:496px;width:74px;height:17px;background:#cbcbcb;"></div>
<div class="a" style="left:286px;top:496px;width:72px;height:17px;background:#cbcbcb;"></div>
<div class="a" style="left:359px;top:496px;width:263px;height:17px;background:#cbcbcb;"></div>
<div class="a" style="left:160px;top:514px;width:50px;height:17px;background:#c4c4c4;"></div>
<div class="a" style="left:211px;top:514px;width:74px;height:17px;background:#cbcbcb;"></div>
<div class="a" style="left:286px;top:514px;width:72px;height:17px;background:#cbcbcb;"></div>
<div class="a" style="left:359px;top:514px;width:263px;height:17px;background:#cbcbcb;"></div>
<div class="a" style="left:160px;top:532px;width:50px;height:17px;background:#c4c4c4;"></div>
<div class="a" style="left:211px;top:532px;width:74px;height:17px;background:#cbcbcb;"></div>
<div class="a" style="left:286px;top:532px;width:72px;height:17px;background:#cbcbcb;"></div>
<div class="a" style="left:359px;top:532px;width:263px;height:17px;background:#cbcbcb;"></div>
<div class="a" style="left:160px;top:550px;width:50px;height:17px;background:#c4c4c4;"></div>
<div class="a" style="left:211px;top:550px;width:74px;height:17px;background:#cbcbcb;"></div>
<div class="a" style="left:286px;top:550px;width:72px;height:17px;background:#cbcbcb;"></div>
<div class="a" style="left:359px;top:550px;width:263px;height:17px;background:#cbcbcb;"></div>
<div class="a" style="left:160px;top:568px;width:50px;height:17px;background:#c4c4c4;"></div>
<div class="a" style="left:211px;top:568px;width:74px;height:17px;background:#cbcbcb;"></div>
<div class="a" style="left:286px;top:568px;width:72px;height:17px;background:#cbcbcb;"></div>
<div class="a" style="left:359px;top:568px;width:263px;height:17px;background:#cbcbcb;"></div>
<div class="a" style="left:160px;top:586px;width:50px;height:17px;background:#c4c4c4;"></div>
<div class="a" style="left:211px;top:586px;width:74px;height:17px;background:#cbcbcb;"></div>
<div class="a" style="left:286px;top:586px;width:72px;height:17px;background:#cbcbcb;"></div>
<div class="a" style="left:359px;top:586px;width:263px;height:17px;background:#cbcbcb;"></div>
<div class="a" style="left:160px;top:604px;width:50px;height:17px;background:#c4c4c4;"></div>
<div class="a" style="left:211px;top:604px;width:74px;height:17px;background:#cbcbcb;"></div>
<div class="a" style="left:286px;top:604px;width:72px;height:17px;background:#cbcbcb;"></div>
<div class="a" style="left:359px;top:604px;width:263px;height:17px;background:#cbcbcb;"></div>
<div class="a" style="left:160px;top:622px;width:50px;height:17px;background:#c4c4c4;"></div>
<div class="a" style="left:211px;top:622px;width:74px;height:17px;background:#cbcbcb;"></div>
<div class="a" style="left:286px;top:622px;width:72px;height:17px;background:#cbcbcb;"></div>
<div class="a" style="left:359px;top:622px;width:263px;height:17px;background:#cbcbcb;"></div>
<div class="a" style="left:160px;top:640px;width:50px;height:17px;background:#c4c4c4;"></div>
<div class="a" style="left:211px;top:640px;width:74px;height:17px;background:#cbcbcb;"></div>
<div class="a" style="left:286px;top:640px;width:72px;height:17px;background:#cbcbcb;"></div>
<div class="a" style="left:359px;top:640px;width:263px;height:17px;background:#cbcbcb;"></div>
<div class="a" style="left:160px;top:658px;width:50px;height:17px;background:#c4c4c4;"></div>
<div class="a" style="left:211px;top:658px;width:74px;height:17px;background:#cbcbcb;"></div>
<div class="a" style="left:286px;top:658px;width:72px;height:17px;background:#cbcbcb;"></div>
<div class="a" style="left:359px;top:658px;width:263px;height:17px;background:#cbcbcb;"></div>
<div class="a" style="left:160px;top:676px;width:50px;height:17px;background:#c4c4c4;"></div>
<div class="a" style="left:211px;top:676px;width:74px;height:17px;background:#cbcbcb;"></div>
<div class="a" style="left:286px;top:676px;width:72px;height:17px;background:#cbcbcb;"></div>
<div class="a" style="left:359px;top:676px;width:263px;height:17px;background:#cbcbcb;"></div>
<div class="a" style="left:160px;top:694px;width:50px;height:17px;background:#c4c4c4;"></div>
<div class="a" style="left:211px;top:694px;width:74px;height:17px;background:#cbcbcb;"></div>
<div class="a" style="left:286px;top:694px;width:72px;height:17px;background:#cbcbcb;"></div>
<div class="a" style="left:359px;top:694px;width:263px;height:17px;background:#cbcbcb;"></div>
<div class="a" style="left:160px;top:712px;width:50px;height:17px;background:#c4c4c4;"></div>
<div class="a" style="left:211px;top:712px;width:74px;height:17px;background:#cbcbcb;"></div>
<div class="a" style="left:286px;top:712px;width:72px;height:17px;background:#cbcbcb;"></div>
<div class="a" style="left:359px;top:712px;width:263px;height:17px;background:#cbcbcb;"></div>
<div class="t" style="left:196px;top:139.69px;font-size:11px;font-weight:400;font-style:normal;color:#7a7a7a;">1</div>
<div class="t" style="left:364px;top:139.69px;font-size:11px;font-weight:400;font-style:normal;color:#7a7a7a;letter-spacing:0.05px">erfasst, noch nicht verarbeitet</div>
<div class="t" style="left:629px;top:113.69px;font-size:11px;font-weight:400;font-style:normal;color:#000;letter-spacing:-0.07px">Aktualisierungsdienst:</div>
<div class="t" style="left:629px;top:130.69px;font-size:11px;font-weight:400;font-style:normal;color:#000;">Adressstamm:</div>
<div class="t" style="left:629px;top:147.69px;font-size:11px;font-weight:400;font-style:normal;color:#000;">Filter</div>
<div class="a" style="left:740px;top:112px;width:192px;height:19px;background:#fff;"></div>
<div class="a" style="left:932px;top:112px;width:17px;height:17px;background:#cce4f7;"></div>
<svg style="left:938px;top:119px" width="9" height="6"><path d="M0.5 0.8L4.5 4.8L8.5 0.8" fill="none" stroke="#444" stroke-width="1"/></svg>
<div class="t" style="left:742px;top:115.69px;font-size:11px;font-weight:700;font-style:normal;color:#000;letter-spacing:0.4px">Adresspflege Online</div>
<div class="a" style="left:923px;top:129px;width:17px;height:3px;background:#d8d8d8;"></div>
<div class="a" style="left:740px;top:146px;width:245px;height:17px;background:#fff;"></div>
<svg style="left:986px;top:147px" width="14" height="14" viewBox="0 0 14 14"><rect x="0" y="0" width="13.5" height="13" rx="1" fill="#8c8c8c"/><rect x="13" y="1" width="1" height="12.5" fill="#b0b0b0"/><rect x="1" y="0.6" width="11.5" height="1" fill="#a8a8a8"/><rect x="1.2" y="3" width="3" height="2.2" fill="#fff"/><rect x="1.2" y="6.3" width="3" height="2.2" fill="#fff"/><rect x="1.2" y="9.6" width="3" height="2.2" fill="#fff"/><rect x="5.2" y="3" width="3" height="2.2" fill="#fff"/><rect x="5.2" y="6.3" width="3" height="2.2" fill="#fff"/><rect x="5.2" y="9.6" width="3" height="2.2" fill="#fff"/><rect x="9.2" y="3" width="3" height="2.2" fill="#fff"/><rect x="9.2" y="6.3" width="3" height="2.2" fill="#fff"/><rect x="9.2" y="9.6" width="3" height="2.2" fill="#fff"/></svg>
<div class="a" style="left:629px;top:184px;width:367px;height:129px;border:1px solid #d8d8d8"></div>
<div class="a" style="left:636px;top:178px;width:38px;height:10px;background:#f4f4f3;"></div>
<div class="t" style="left:638px;top:178.84px;font-size:12px;font-weight:400;font-style:normal;color:#000;">Export</div>
<div class="t" style="left:636px;top:193.69px;font-size:11px;font-weight:400;font-style:italic;color:#000;">Anzahl Personen:</div>
<div class="t" style="left:636px;top:210.69px;font-size:11px;font-weight:400;font-style:italic;color:#000;">davon nicht verarbeitet:</div>
<div class="t" style="left:636px;top:227.69px;font-size:11px;font-weight:400;font-style:italic;color:#000;">Anzahl Namensvarianten:</div>
<div class="t" style="left:636px;top:244.69px;font-size:11px;font-weight:400;font-style:italic;color:#000;">Anzahl Firmen:</div>
<div class="t" style="left:636px;top:261.69px;font-size:11px;font-weight:400;font-style:italic;color:#000;">Anzahl privat Personen:</div>
<div class="t" style="left:636px;top:278.69px;font-size:11px;font-weight:400;font-style:italic;color:#000;">Exportdatei:</div>
<div class="t" style="left:821px;top:210.69px;font-size:11px;font-weight:700;font-style:normal;color:#000;">0</div>
<div class="t" style="left:821px;top:227.69px;font-size:11px;font-weight:700;font-style:normal;color:#000;">0</div>
<div class="t" style="left:821px;top:244.69px;font-size:11px;font-weight:700;font-style:normal;color:#000;">0</div>
<div class="t" style="left:821px;top:261.69px;font-size:11px;font-weight:700;font-style:normal;color:#000;">0</div>
<div class="a" style="left:629px;top:335px;width:367px;height:78px;border:1px solid #d8d8d8"></div>
<div class="a" style="left:636px;top:329px;width:38px;height:10px;background:#f4f4f3;"></div>
<div class="t" style="left:638px;top:329.84px;font-size:12px;font-weight:400;font-style:normal;color:#000;">Import</div>
<div class="t" style="left:636px;top:344.69px;font-size:11px;font-weight:400;font-style:italic;color:#000;">Anzahl Mutationen:</div>
<div class="t" style="left:636px;top:361.69px;font-size:11px;font-weight:400;font-style:italic;color:#000;">Anzahl Verstorbene:</div>
<div class="t" style="left:636px;top:378.69px;font-size:11px;font-weight:400;font-style:italic;color:#000;">Importdatei:</div>
<div class="t" style="left:796px;top:344.69px;font-size:11px;font-weight:700;font-style:normal;color:#000;">0</div>
<div class="t" style="left:781px;top:361.69px;font-size:11px;font-weight:700;font-style:normal;color:#000;">0</div>
<div class="a" style="left:629px;top:435px;width:372px;height:52px;border:1px solid #d8d8d8"></div>
<div class="a" style="left:636px;top:429px;width:52px;height:10px;background:#f4f4f3;"></div>
<div class="t" style="left:638px;top:429.84px;font-size:12px;font-weight:400;font-style:normal;color:#000;">Protokoll</div>
<div class="a" style="left:636px;top:443px;width:358px;height:24px;background:#fff;"></div>
<div class="a" style="left:681px;top:443px;width:1px;height:24px;background:#e3e3e3;"></div>
<div class="a" style="left:754px;top:443px;width:1px;height:24px;background:#e3e3e3;"></div>
<svg style="left:656px;top:443px" width="8" height="5"><path d="M0.3 4.2L3.5 1L6.7 4.2" fill="none" stroke="#555" stroke-width="1"/></svg>
<div class="t" style="left:642px;top:449.69px;font-size:11px;font-weight:400;font-style:normal;color:#000;">Status</div>
<div class="t" style="left:719px;top:449.69px;font-size:11px;font-weight:400;font-style:normal;color:#000;letter-spacing:-0.3px">Job-ID</div>
<div class="t" style="left:761px;top:449.69px;font-size:11px;font-weight:400;font-style:normal;color:#000;letter-spacing:-0.1px">Ausgabe</div>
<div class="a" style="left:636px;top:467px;width:358px;height:17px;background:#fff;"></div>
<div class="a" style="left:636px;top:467px;width:46px;height:17px;background:#c4c4c4;"></div>
<div class="a" style="left:683px;top:467px;width:72px;height:17px;background:#cbcbcb;"></div>
<div class="a" style="left:756px;top:467px;width:238px;height:17px;background:#cbcbcb;"></div>
<div class="a" style="left:738px;top:132px;width:213px;height:72px;background:#fff;border:1px solid #0a6fd0;box-shadow:2px 2px 2px rgba(0,0,0,0.45)"></div>
<div class="a" style="left:739px;top:133px;width:211px;height:14px;background:#0078d7;"></div>
<div class="t" style="left:741px;top:134.69px;font-size:11px;font-weight:700;font-style:normal;color:#fff;letter-spacing:0.45px">Adresspflege Online</div>
<div class="t" style="left:741px;top:148.69px;font-size:11px;font-weight:700;font-style:normal;color:#000;letter-spacing:0.45px">Adresspflege über Webservice</div>
<div class="t" style="left:741px;top:162.69px;font-size:11px;font-weight:700;font-style:normal;color:#000;letter-spacing:0.45px">CRIF</div>
<div class="t" style="left:741px;top:176.69px;font-size:11px;font-weight:700;font-style:normal;color:#000;letter-spacing:0.45px">Matchmove</div>
<div class="t" style="left:741px;top:190.69px;font-size:11px;font-weight:700;font-style:normal;color:#000;letter-spacing:0.45px">Multisource</div>
<div class="t" style="left:3px;top:737.84px;font-size:12px;font-weight:400;font-style:normal;color:#000;">Aktualisierungsdienst</div>
<div class="a" style="left:911px;top:739px;width:2px;height:2px;background:#a09880;"></div>
<div class="a" style="left:911px;top:743px;width:2px;height:2px;background:#a09880;"></div>
<div class="a" style="left:911px;top:747px;width:2px;height:2px;background:#a09880;"></div>
<div class="a" style="left:911px;top:751px;width:2px;height:2px;background:#a09880;"></div>
<div class="a" style="left:982px;top:739px;width:2px;height:2px;background:#a09880;"></div>
<div class="a" style="left:982px;top:743px;width:2px;height:2px;background:#a09880;"></div>
<div class="a" style="left:982px;top:747px;width:2px;height:2px;background:#a09880;"></div>
<div class="a" style="left:982px;top:751px;width:2px;height:2px;background:#a09880;"></div>
<div class="t" style="left:918px;top:740.69px;font-size:11px;font-weight:400;font-style:normal;color:#000;letter-spacing:-0.15px">Normal / pav</div>
<svg style="left:989px;top:738px" width="16" height="16" viewBox="-1 -1 18 18"><rect x="5.8" y="0.3" width="4.4" height="4" transform="rotate(0 8 8)" fill="#3c62dc"/><rect x="5.8" y="0.3" width="4.4" height="4" transform="rotate(45 8 8)" fill="#3c62dc"/><rect x="5.8" y="0.3" width="4.4" height="4" transform="rotate(90 8 8)" fill="#3c62dc"/><rect x="5.8" y="0.3" width="4.4" height="4" transform="rotate(135 8 8)" fill="#3c62dc"/><rect x="5.8" y="0.3" width="4.4" height="4" transform="rotate(180 8 8)" fill="#3c62dc"/><rect x="5.8" y="0.3" width="4.4" height="4" transform="rotate(225 8 8)" fill="#3c62dc"/><rect x="5.8" y="0.3" width="4.4" height="4" transform="rotate(270 8 8)" fill="#3c62dc"/><rect x="5.8" y="0.3" width="4.4" height="4" transform="rotate(315 8 8)" fill="#3c62dc"/><circle cx="8" cy="8" r="5.3" fill="#3c62dc"/><circle cx="8" cy="8" r="2.4" fill="#f0f0f0"/><polygon points="12.20,0.40 13.38,3.38 16.57,3.58 14.10,5.62 14.90,8.72 12.20,7.00 9.50,8.72 10.30,5.62 7.83,3.58 11.02,3.38" fill="#ffd200"/></svg>
</body></html>
